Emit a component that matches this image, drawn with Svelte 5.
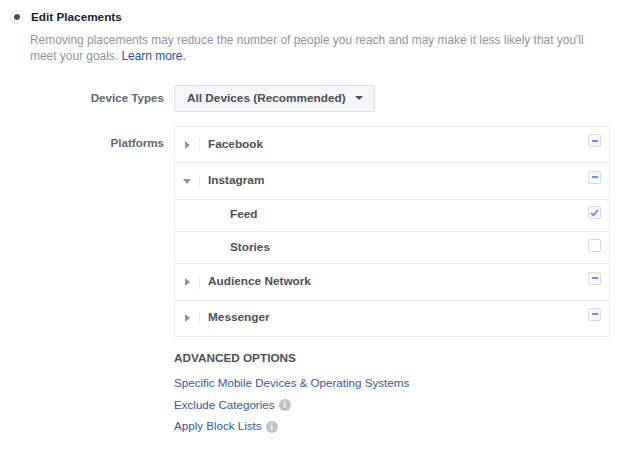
<script>
    const platforms = [
        { name: "Facebook", state: "mixed", arrow: "right" },
        { name: "Instagram", state: "mixed", arrow: "down" },
        { name: "Feed", state: "checked", child: true },
        { name: "Stories", state: "empty", child: true },
        { name: "Audience Network", state: "mixed", arrow: "right" },
        { name: "Messenger", state: "mixed", arrow: "right" }
    ];
    const links = [
        { label: "Specific Mobile Devices & Operating Systems" },
        { label: "Exclude Categories", info: true },
        { label: "Apply Block Lists", info: true }
    ];
</script>

<main class="page">
    <div class="head">
        <span class="radio"><span class="dot"></span></span>
        <span class="title">Edit Placements</span>
    </div>
    <p class="note">
        Removing placements may reduce the number of people you reach and may make it less likely that you'll
        meet your goals. <a href="#learn">Learn more.</a>
    </p>

    <div class="row device">
        <div class="label">Device Types</div>
        <button class="select">All Devices (Recommended)<span class="caret"></span></button>
    </div>

    <div class="row platforms">
        <div class="label plat-label">Platforms</div>
        <div class="col">
            <div class="table">
                {#each platforms as p}
                    <div class="item" class:child={p.child}>
                        {#if !p.child}
                            <span class="arrow-cell">
                                <span class={p.arrow === "down" ? "arrow-down" : "arrow-right"}></span>
                            </span>
                        {/if}
                        <span class="name">{p.name}</span>
                        <span class="box" class:tinted={p.state !== "empty"}>
                            {#if p.state === "mixed"}
                                <span class="dash"></span>
                            {:else if p.state === "checked"}
                                <svg width="9" height="8" viewBox="0 0 9 8"><path d="M1 4 L3.4 6.4 L8 1.2" fill="none" stroke="#6f93ec" stroke-width="2"/></svg>
                            {/if}
                        </span>
                    </div>
                {/each}
            </div>

            <h3>ADVANCED OPTIONS</h3>
            {#each links as l}
                <div class="link">
                    <a href="#opt">{l.label}</a>
                    {#if l.info}<span class="info">i</span>{/if}
                </div>
            {/each}
        </div>
    </div>
</main>

<style>
    :global(body) {
        margin: 0;
        background: #fff;
    }
    .page {
        width: 620px;
        height: 452px;
        overflow: hidden;
        font-family: "Liberation Sans", Arial, sans-serif;
        font-size: 12px;
        color: #4b4f56;
        padding-top: 8px;
        box-sizing: border-box;
    }
    .head {
        display: flex;
        align-items: center;
        padding-left: 10px;
        height: 18px;
    }
    .radio {
        width: 13px;
        height: 13px;
        box-sizing: border-box;
        border: 1px solid #dddfe2;
        border-radius: 50%;
        display: flex;
        align-items: center;
        justify-content: center;
        background: #fff;
    }
    .dot {
        width: 6px;
        height: 6px;
        border-radius: 50%;
        background: #4b4f56;
    }
    .title {
        margin-left: 8px;
        padding-bottom: 2px;
        font-weight: bold;
        font-size: 11.75px;
        color: #1d2129;
    }
    .note {
        margin: 6px 0 0 30px;
        width: 570px;
        font-size: 11.93px;
        line-height: 16px;
        color: #90949c;
    }
    a {
        color: #365899;
        text-decoration: none;
    }
    .note a {
        color: #20509e;
    }
    .row {
        display: flex;
    }
    .label {
        width: 164px;
        text-align: right;
        font-weight: bold;
        font-size: 11.6px;
        color: #606770;
    }
    .device {
        margin-top: 21px;
        align-items: center;
    }
    .device .label {
        padding-bottom: 2px;
    }
    .select {
        margin-left: 10px;
        width: 201px;
        height: 27px;
        padding: 0 0 2px 12px;
        display: flex;
        align-items: center;
        border: 1px solid #dddfe2;
        border-radius: 2px;
        background: #f5f6f7;
        font: bold 11.8px "Liberation Sans", Arial, sans-serif;
        color: #4b4f56;
    }
    .caret {
        margin-left: 9px;
        border-left: 4px solid transparent;
        border-right: 4px solid transparent;
        border-top: 4px solid #4b4f56;
    }
    .platforms {
        margin-top: 14px;
    }
    .plat-label {
        padding-top: 10px;
    }
    .col {
        margin-left: 10px;
    }
    .table {
        width: 434px;
        border: 1px solid #e9ebee;
        border-bottom: none;
    }
    .item {
        display: flex;
        align-items: center;
        height: 35.4px;
        border-bottom: 1px solid #e9ebee;
        font-weight: bold;
        font-size: 11.8px;
        color: #4b4f56;
    }
    .item.child {
        height: 31.3px;
        padding-left: 55px;
    }
    .arrow-cell {
        width: 24px;
        height: 13px;
        border-right: 1px solid #e9ebee;
        display: flex;
        align-items: center;
        justify-content: center;
        margin-right: 8px;
    }
    .arrow-right {
        border-top: 4px solid transparent;
        border-bottom: 4px solid transparent;
        border-left: 5px solid #90949c;
    }
    .arrow-down {
        border-left: 4px solid transparent;
        border-right: 4px solid transparent;
        border-top: 5px solid #90949c;
    }
    .name {
        flex: 1;
        padding-bottom: 2px;
    }
    .box {
        width: 13px;
        height: 13px;
        box-sizing: border-box;
        margin: 0 8px 8px 0;
        border: 1.5px solid #d8dade;
        border-radius: 2px;
        display: flex;
        align-items: center;
        justify-content: center;
        background: #fff;
    }
    .child .box {
        margin-bottom: 5px;
    }
    .box.tinted {
        background: #f6f8fe;
    }
    .dash {
        width: 6px;
        height: 2px;
        background: #6f93ec;
    }
    h3 {
        margin: 14px 0 8px;
        font-size: 11.75px;
        color: #4b4f56;
        line-height: 14px;
    }
    .link {
        height: 21.5px;
        display: flex;
        align-items: center;
        gap: 4px;
    }
    .link a {
        padding-bottom: 2px;
        font-size: 11.6px;
        color: #365899;
    }
    .info {
        width: 12px;
        height: 12px;
        border-radius: 50%;
        background: #bec2c9;
        color: #fff;
        font-size: 9px;
        font-weight: bold;
        line-height: 12px;
        text-align: center;
    }
</style>
